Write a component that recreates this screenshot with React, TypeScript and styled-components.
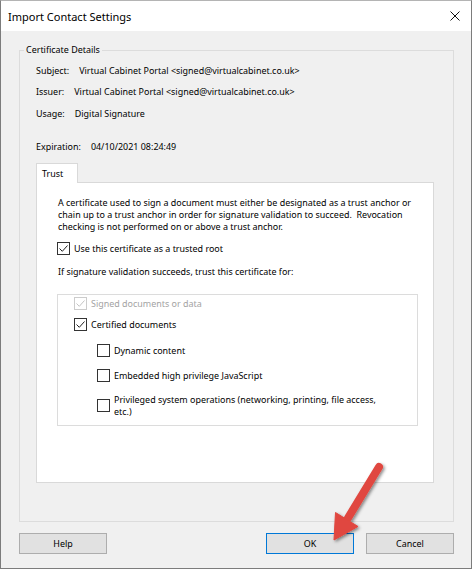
import React from "react";
import styled, { createGlobalStyle } from "styled-components";

const GlobalStyle = createGlobalStyle`
  html, body {
    margin: 0;
    padding: 0;
  }
  body {
    font-family: "Noto Sans", "DejaVu Sans", sans-serif;
    font-size: 8.95px;
    color: #000;
  }
  * {
    box-sizing: border-box;
  }
`;

const Window = styled.div`
  position: relative;
  width: 472px;
  height: 569px;
  display: flex;
  flex-direction: column;
  border: 1px solid #7c7c7c;
  border-top-color: #b4b4b4;
  background: #f0f0f0;
  overflow: hidden;
`;

const TitleBar = styled.div`
  flex: 0 0 30px;
  background: #fff;
  display: flex;
  align-items: center;
  justify-content: space-between;
  padding: 0 10px 0 7px;
  font-size: 11px;
`;

const CloseButton = styled.div`
  display: flex;
  width: 12px;
  height: 12px;
  align-items: center;
  justify-content: center;
`;

const Body = styled.div`
  flex: 1;
  display: flex;
  flex-direction: column;
  padding: 13px 17px 14px 18px;
`;

const GroupBox = styled.fieldset`
  flex: 1;
  margin: 0;
  padding: 0;
  min-width: 0;
  border: 1px solid #dcdcdc;
  display: flex;
  flex-direction: column;
`;

const Legend = styled.legend`
  margin-left: 4px;
  padding: 0 2px;
  line-height: 12px;
`;

const GroupContent = styled.div`
  flex: 1;
  display: flex;
  flex-direction: column;
  padding: 9px 19px 38px 16px;
`;

const InfoRow = styled.div<{ $top: number }>`
  display: flex;
  gap: 10px;
  line-height: 12px;
  margin-top: ${(p) => p.$top}px;
`;

const TabStrip = styled.div`
  display: flex;
  margin-top: 10px;
`;

const Tab = styled.div`
  position: relative;
  z-index: 1;
  width: 42px;
  height: 20px;
  margin-bottom: -1px;
  padding-left: 5px;
  line-height: 19px;
  background: #fff;
  border: 1px solid #d9d9d9;
  border-bottom: none;
`;

const TabPanel = styled.div`
  flex: 1;
  display: flex;
  flex-direction: column;
  background: #fff;
  border: 1px solid #d9d9d9;
  padding: 14px 15px 0 20px;
`;

const Paragraph = styled.p`
  margin: 0 0 0 1px;
  line-height: 12px;
  white-space: nowrap;
`;

const CheckRow = styled.label<{ $top: number; $indent?: number; $disabled?: boolean }>`
  display: flex;
  align-items: center;
  gap: 4px;
  line-height: 12px;
  margin-top: ${(p) => p.$top}px;
  margin-left: ${(p) => p.$indent ?? 0}px;
  color: ${(p) => (p.$disabled ? "#a3a3a3" : "#000")};
  white-space: nowrap;
`;

const Box = styled.span<{ $disabled?: boolean }>`
  flex: 0 0 13px;
  width: 13px;
  height: 13px;
  display: flex;
  align-items: center;
  justify-content: center;
  background: #fff;
  border: 1px solid ${(p) => (p.$disabled ? "#cccccc" : "#333333")};
`;

const Caption = styled.div<{ $top: number }>`
  line-height: 12px;
  margin-top: ${(p) => p.$top}px;
  margin-left: 1px;
`;

const OptionsBox = styled.div`
  margin-top: 16px;
  padding: 2px 0 8px 16px;
  border: 1px solid #dcdcdc;
  display: flex;
  flex-direction: column;
`;

const MultiLine = styled.span`
  line-height: 11.5px;
`;

const ButtonRow = styled.div`
  display: flex;
  gap: 12px;
  margin-top: 11px;
`;

const Spacer = styled.div`
  flex: 1;
`;

const Button = styled.button<{ $primary?: boolean }>`
  width: 88px;
  height: 21px;
  padding: 0;
  font: inherit;
  color: #000;
  background: #e1e1e1;
  border: 1px solid ${(p) => (p.$primary ? "#0078d7" : "#adadad")};
`;

const Annotation = styled.svg`
  position: absolute;
  left: 0;
  top: 0;
  pointer-events: none;
`;

type CheckProps = {
  checked?: boolean;
  disabled?: boolean;
};

const Check = ({ checked, disabled }: CheckProps) => (
  <Box $disabled={disabled}>
    {checked && (
      <svg width="11" height="11" viewBox="0 0 11 11">
        <path
          d="M1.5 5.5 L4.3 8.3 L9.5 2.5"
          fill="none"
          stroke={disabled ? "#c4c4c4" : "#222"}
          strokeWidth="1"
        />
      </svg>
    )}
  </Box>
);

export default function App() {
  return (
    <>
      <GlobalStyle />
      <Window>
        <TitleBar>
          <span>Import Contact Settings</span>
          <CloseButton>
            <svg width="10" height="10" viewBox="0 0 10 10">
              <path d="M0.5 0.5 L9.5 9.5 M9.5 0.5 L0.5 9.5" stroke="#111" strokeWidth="1" />
            </svg>
          </CloseButton>
        </TitleBar>
        <Body>
          <GroupBox>
            <Legend>Certificate Details</Legend>
            <GroupContent>
              <InfoRow $top={0}>
                <span>Subject:</span>
                <span>Virtual Cabinet Portal &lt;signed@virtualcabinet.co.uk&gt;</span>
              </InfoRow>
              <InfoRow $top={9}>
                <span>Issuer:</span>
                <span>Virtual Cabinet Portal &lt;signed@virtualcabinet.co.uk&gt;</span>
              </InfoRow>
              <InfoRow $top={10}>
                <span>Usage:</span>
                <span>Digital Signature</span>
              </InfoRow>
              <InfoRow $top={21}>
                <span>Expiration:</span>
                <span>04/10/2021 08:24:49</span>
              </InfoRow>
              <TabStrip>
                <Tab>Trust</Tab>
              </TabStrip>
              <TabPanel>
                <Paragraph>
                  A certificate used to sign a document must either be designated as a trust anchor or
                  <br />
                  chain up to a trust anchor in order for signature validation to succeed.&nbsp; Revocation
                  <br />
                  checking is not performed on or above a trust anchor.
                </Paragraph>
                <CheckRow $top={9}>
                  <Check checked />
                  Use this certificate as a trusted root
                </CheckRow>
                <Caption $top={11}>If signature validation succeeds, trust this certificate for:</Caption>
                <OptionsBox>
                  <CheckRow $top={0} $disabled>
                    <Check checked disabled />
                    Signed documents or data
                  </CheckRow>
                  <CheckRow $top={8}>
                    <Check checked />
                    Certified documents
                  </CheckRow>
                  <CheckRow $top={13} $indent={23}>
                    <Check />
                    Dynamic content
                  </CheckRow>
                  <CheckRow $top={12} $indent={23}>
                    <Check />
                    Embedded high privilege JavaScript
                  </CheckRow>
                  <CheckRow $top={12} $indent={23}>
                    <Check />
                    <MultiLine>
                      Privileged system operations (networking, printing, file access,
                      <br />
                      etc.)
                    </MultiLine>
                  </CheckRow>
                </OptionsBox>
              </TabPanel>
            </GroupContent>
          </GroupBox>
          <ButtonRow>
            <Button>Help</Button>
            <Spacer />
            <Button $primary>OK</Button>
            <Button>Cancel</Button>
          </ButtonRow>
        </Body>
        <Annotation width="472" height="569" viewBox="0 0 472 569">
          <defs>
            <filter id="arrowShadow" x="-50%" y="-50%" width="200%" height="200%">
              <feDropShadow dx="1.5" dy="1.5" stdDeviation="1.5" floodColor="#000" floodOpacity="0.45" />
            </filter>
          </defs>
          <g filter="url(#arrowShadow)" fill="#e0473f" stroke="#e0473f">
            <line x1="378" y1="466" x2="347" y2="517" strokeWidth="8" strokeLinecap="round" />
            <polygon points="357,525.5 333,539 334.5,511.5" strokeWidth="1" strokeLinejoin="round" />
          </g>
        </Annotation>
      </Window>
    </>
  );
}
